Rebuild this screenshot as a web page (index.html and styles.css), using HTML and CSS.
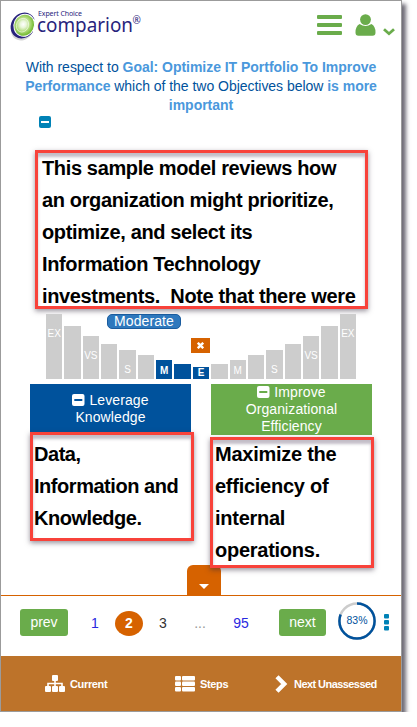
FILE: index.html
```html
<!DOCTYPE html>
<html lang="en">
<head>
<meta charset="utf-8">
<title>Comparion</title>
<link rel="stylesheet" href="styles.css">
</head>
<body>
<main class="app">
  <header class="header">
    <svg class="logo" width="136" height="34" viewBox="0 0 136 34" role="img" aria-label="Expert Choice comparion">
      <defs>
        <radialGradient id="orb" cx="44%" cy="48%"><stop offset="0" stop-color="#fff"/><stop offset=".3" stop-color="#e9f6d9"/><stop offset=".65" stop-color="#b2dc7c"/><stop offset="1" stop-color="#76bb35"/></radialGradient>
      </defs>
      <ellipse cx="12.5" cy="18" rx="11" ry="13" transform="rotate(32 12.5 18)" fill="#d5d5d5"/>
      <ellipse cx="13" cy="15.5" rx="11.8" ry="13.5" transform="rotate(35 13 15.5)" fill="#28237c"/>
      <path d="M23 9l4 1v11l-4 3z" fill="#fff"/>
      <ellipse cx="14.2" cy="15.2" rx="10.2" ry="11.2" transform="rotate(25 14.2 15.2)" fill="url(#orb)" stroke="#fff"/>
      <ellipse cx="12.5" cy="15.2" rx="6" ry="7" transform="rotate(25 12.5 15.2)" fill="none" stroke="#fff" stroke-width=".7" opacity=".7"/>
      <text class="logo-small" x="28" y="5.5" textLength="44">Expert Choice</text>
      <text class="logo-name" x="27" y="22" textLength="96" lengthAdjust="spacingAndGlyphs">comparion</text>
      <text class="logo-mark" x="122.5" y="13.5">®</text>
    </svg>
    <svg class="menu" width="25" height="21" viewBox="0 0 25 21" fill="#6aac4b"><rect y="0" width="25" height="4" rx="1"/><rect y="8" width="25" height="4" rx="1"/><rect y="16" width="25" height="4" rx="1"/></svg>
    <svg class="user" width="21" height="22" viewBox="0 0 21 22" fill="#6aac4b"><circle cx="10.5" cy="5.6" r="5.4"/><path d="M4.6 10Q10.5 14 16.4 10Q20.5 12 20.5 18.5Q20.5 21.8 17.5 21.8H3.5Q.5 21.8 .5 18.5Q.5 12 4.6 10Z"/></svg>
    <svg class="caret" width="12" height="8" viewBox="0 0 12 8" fill="none" stroke="#6aac4b" stroke-width="2.8"><path d="M1 1.2L6 5.7L11 1.2"/></svg>
  </header>

  <h1 class="question">
    <span class="row">With respect to <b>Goal: Optimize IT Portfolio To Improve</b></span>
    <span class="row"><b>Performance</b> which of the two Objectives below <b>is more</b></span>
    <span class="row"><b>important</b></span>
  </h1>
  <svg class="collapse" width="12" height="12" viewBox="0 0 12 12"><rect width="12" height="12" rx="2" fill="#0082b6"/><rect x="2" y="5" width="8" height="2" fill="#fff"/></svg>

  <section class="note intro"><p>This sample model reviews how<br>an organization might prioritize,<br>optimize, and select its<br>Information Technology<br>investments.&nbsp; Note that there were</p></section>

  <section class="scale">
    <div class="bar b9"><span>EX</span></div><div class="bar b8"></div><div class="bar b7"><span>VS</span></div><div class="bar b6"></div><div class="bar b5"><span>S</span></div><div class="bar b4"></div><div class="bar b3 on"><span>M</span></div><div class="bar b2 on"></div><div class="bar b1 on"><span>E</span></div><div class="bar b2"></div><div class="bar b3"><span>M</span></div><div class="bar b4"></div><div class="bar b5"><span>S</span></div><div class="bar b6"></div><div class="bar b7"><span>VS</span></div><div class="bar b8"></div><div class="bar b9"><span>EX</span></div>
    <div class="badge">Moderate</div>
    <div class="clear"><svg width="7" height="7" viewBox="0 0 7 7" stroke="#fff" stroke-width="2.4"><path d="M.8 .8L6.2 6.2M6.2 .8L.8 6.2"/></svg></div>
  </section>

  <section class="pair">
    <article class="left">
      <h2 class="name blue"><span><svg width="13" height="12" viewBox="0 0 13 12"><rect width="12.5" height="12" rx="2" fill="#fff"/><rect x="2.3" y="5" width="8" height="2" fill="#00529c"/></svg> Leverage<br>Knowledge</span></h2>
      <div class="note"><p>Data,<br>Information and<br>Knowledge.</p></div>
    </article>
    <article class="right">
      <h2 class="name green"><span><svg width="13" height="12" viewBox="0 0 13 12"><rect width="12.5" height="12" rx="2" fill="#fff"/><rect x="2.3" y="5" width="8" height="2" fill="#6aac4b"/></svg> Improve<br>Organizational<br>Efficiency</span></h2>
      <div class="note"><p>Maximize the<br>efficiency of<br>internal<br>operations.</p></div>
    </article>
  </section>

  <nav class="pager">
    <div class="tab"><svg width="10" height="5" viewBox="0 0 10 5"><path d="M0 0H10L5 5Z" fill="#fff"/></svg></div>
    <span class="btn prev">prev</span>
    <span class="page link p1">1</span>
    <span class="page current">2</span>
    <span class="page p3">3</span>
    <span class="page dots">...</span>
    <span class="page link p95">95</span>
    <span class="btn next">next</span>
    <svg class="ring" width="38" height="38" viewBox="0 0 38 38"><circle cx="19" cy="19" r="17.6" fill="none" stroke="#ccc" stroke-width="2.5"/><circle cx="19" cy="19" r="17.6" pathLength="100" fill="none" stroke="#00529c" stroke-width="2.5" stroke-dasharray="81 19" transform="rotate(-90 19 19)"/><text x="19" y="22" text-anchor="middle" textLength="21">83%</text></svg>
    <svg class="more" width="5" height="17" viewBox="0 0 5 17" fill="#0082b6"><rect width="5" height="4.6" rx="1"/><rect y="6" width="5" height="4.6" rx="1"/><rect y="12" width="5" height="4.6" rx="1"/></svg>
  </nav>

  <footer class="footer">
    <div class="item current-item"><svg width="20" height="17" viewBox="0 0 20 17" fill="#fff"><rect x="7" width="6" height="6" rx="1"/><rect y="11" width="6" height="6" rx="1"/><rect x="7" y="11" width="6" height="6" rx="1"/><rect x="14" y="11" width="6" height="6" rx="1"/><path d="M3 12V8.5H17V12M10 5V12" fill="none" stroke="#fff" stroke-width="1.6"/></svg><span>Current</span></div>
    <div class="item steps"><svg width="20" height="16" viewBox="0 0 20 16" fill="#fff"><rect width="6" height="4.5" rx="1"/><rect x="7" width="13" height="4.5" rx="1"/><rect y="5.5" width="6" height="4.5" rx="1"/><rect x="7" y="5.5" width="13" height="4.5" rx="1"/><rect y="11" width="6" height="4.5" rx="1"/><rect x="7" y="11" width="13" height="4.5" rx="1"/></svg><span>Steps</span></div>
    <div class="item unassessed"><svg width="13" height="18" viewBox="0 0 13 18" fill="none" stroke="#fff" stroke-width="4.4"><path d="M2 1.8L9.2 9L2 16.2"/></svg><span>Next Unassessed</span></div>
  </footer>
</main>
</body>
</html>
```
FILE: styles.css
```css
* { box-sizing: border-box; }
body { margin: 0; background: #fff; font-family: "Liberation Sans", Arial, sans-serif; overflow: hidden; }
svg { display: block; flex: none; }
.app { width: 402px; height: 712px; border: 1px solid #9b9b9b; background: #fff; box-shadow: 4px 4px 4px rgba(50, 45, 60, .7); display: flex; flex-direction: column; }
.header { height: 55px; display: flex; align-items: flex-start; padding: 8px 0 0 8px; flex: none; }
.logo { overflow: visible; margin: 1px 0 0 1px; }
.logo text { font-family: "Noto Sans", "Open Sans", sans-serif; fill: #28237c; }
.logo .logo-small { font-size: 7px; }
.logo .logo-name { font-size: 20px; }
.logo .logo-mark { font-size: 10px; }
.menu { margin: 6px 0 0 171px; }
.user { margin: 5px 0 0 13px; }
.caret { margin: 19px 0 0 7px; }

.question { margin: 2px 0 0; height: 57px; flex: none; font-size: 14px; font-weight: 400; line-height: 19px; letter-spacing: -.03px; color: #00529c; text-align: center; }
.question .row { display: block; white-space: nowrap; }
.question b { color: #4a98dc; }
.collapse { margin: 1px 0 0 38px; }

.note { border: 3px solid #f8423a; background: #fff; color: #000; font-size: 20px; line-height: 32px; font-weight: 700; letter-spacing: -.46px; white-space: nowrap; overflow: hidden; box-shadow: 0 2px 5px rgba(50, 40, 60, .5), inset 0 4px 3px rgba(80, 65, 95, .35); }
.note p { margin: 0; }
.intro { width: 333px; height: 159px; flex: none; margin: 22px 0 0 34px; padding: 0 4px; letter-spacing: -.36px; }
.intro p { margin-top: -1px; }

.scale { position: relative; width: 310px; height: 65px; margin: 5px 0 0 45px; display: grid; grid-template-columns: repeat(17, 1fr); column-gap: 2px; align-items: end; flex: none; }
.bar { background: #cdcdcd; color: #fff; font-size: 10px; line-height: 12px; display: flex; justify-content: center; }
.bar.on { background: #00529c; }
.b9 { height: 65px; padding-top: 14px; } .b8 { height: 53px; } .b7 { height: 43px; padding-top: 14px; } .b6 { height: 35px; } .b5 { height: 29px; padding-top: 14px; } .b4 { height: 24px; } .b3 { height: 19px; padding-top: 5px; } .b2 { height: 15px; } .b1 { height: 12px; line-height: 11px; }
.on { font-weight: 700; }
.badge { position: absolute; left: 61px; top: 0; width: 74px; height: 15px; border: 1px solid #1b5c9e; border-radius: 5px; background: #2e78bd; color: #fff; font-size: 14px; line-height: 13px; letter-spacing: .1px; text-align: center; }
.clear { position: absolute; left: 145px; top: 24px; width: 19px; height: 15px; background: #d66200; display: flex; align-items: center; justify-content: center; }

.pair { display: flex; align-items: flex-start; margin: 5px 0 0 29px; height: 211px; flex: none; }
.left { width: 164px; margin-right: 16px; }
.right { width: 164px; position: relative; z-index: 2; }
.name { margin: 0; width: 161px; color: #fff; font-size: 14px; font-weight: 400; line-height: 17px; letter-spacing: .1px; text-align: center; display: flex; align-items: center; justify-content: center; }
.name svg { display: inline-block; vertical-align: -1px; }
.blue { height: 48px; background: #00529c; padding-top: 2px; }
.green { height: 51px; background: #6aac4b; margin: 0 0 2px 1px; }
.left .note { height: 109px; padding: 3px 0 0 1px; }
.right .note { height: 131px; padding: 0 0 0 2px; letter-spacing: -.26px; }
.right .note p { margin-top: -2px; }

.pager { position: relative; height: 61px; flex: none; border-top: 1px solid #d66200; display: flex; align-items: flex-start; font-size: 14px; }
.tab { position: absolute; left: 186px; top: -31px; width: 34px; height: 31px; border-radius: 6px 6px 0 0; background: #d66200; display: flex; justify-content: center; padding-top: 19px; }
.btn { height: 27px; margin-top: 13px; border-radius: 3px; background: #6aac4b; color: #fff; line-height: 26px; text-align: center; }
.prev { width: 48px; margin-left: 19px; }
.page { margin-top: 15px; height: 25px; line-height: 25px; text-align: center; color: #333; }
.link { color: #2929df; }
.p1 { width: 10px; margin-left: 22px; }
.current { width: 28px; margin-left: 15px; border-radius: 50%; background: #d66200; color: #fff; font-weight: 700; }
.p3 { width: 10px; margin-left: 15px; }
.dots { width: 14px; margin-left: 25px; color: #999; }
.p95 { width: 20px; margin-left: 24px; }
.next { width: 47px; margin-left: 28px; }
.ring { margin: 6px 0 0 12px; }
.ring text { font-size: 10.5px; fill: #00529c; }
.more { margin: 18px 0 0 8px; }

.footer { flex: 1; background: #bd732a; display: flex; align-items: center; color: #fff; font-size: 11px; font-weight: 700; letter-spacing: -.35px; }
.item { display: flex; align-items: center; gap: 5px; height: 20px; white-space: nowrap; }
.current-item { width: 130px; margin-left: 44px; }
.steps { width: 100px; }
.unassessed { gap: 6px; letter-spacing: -.56px; }
```
